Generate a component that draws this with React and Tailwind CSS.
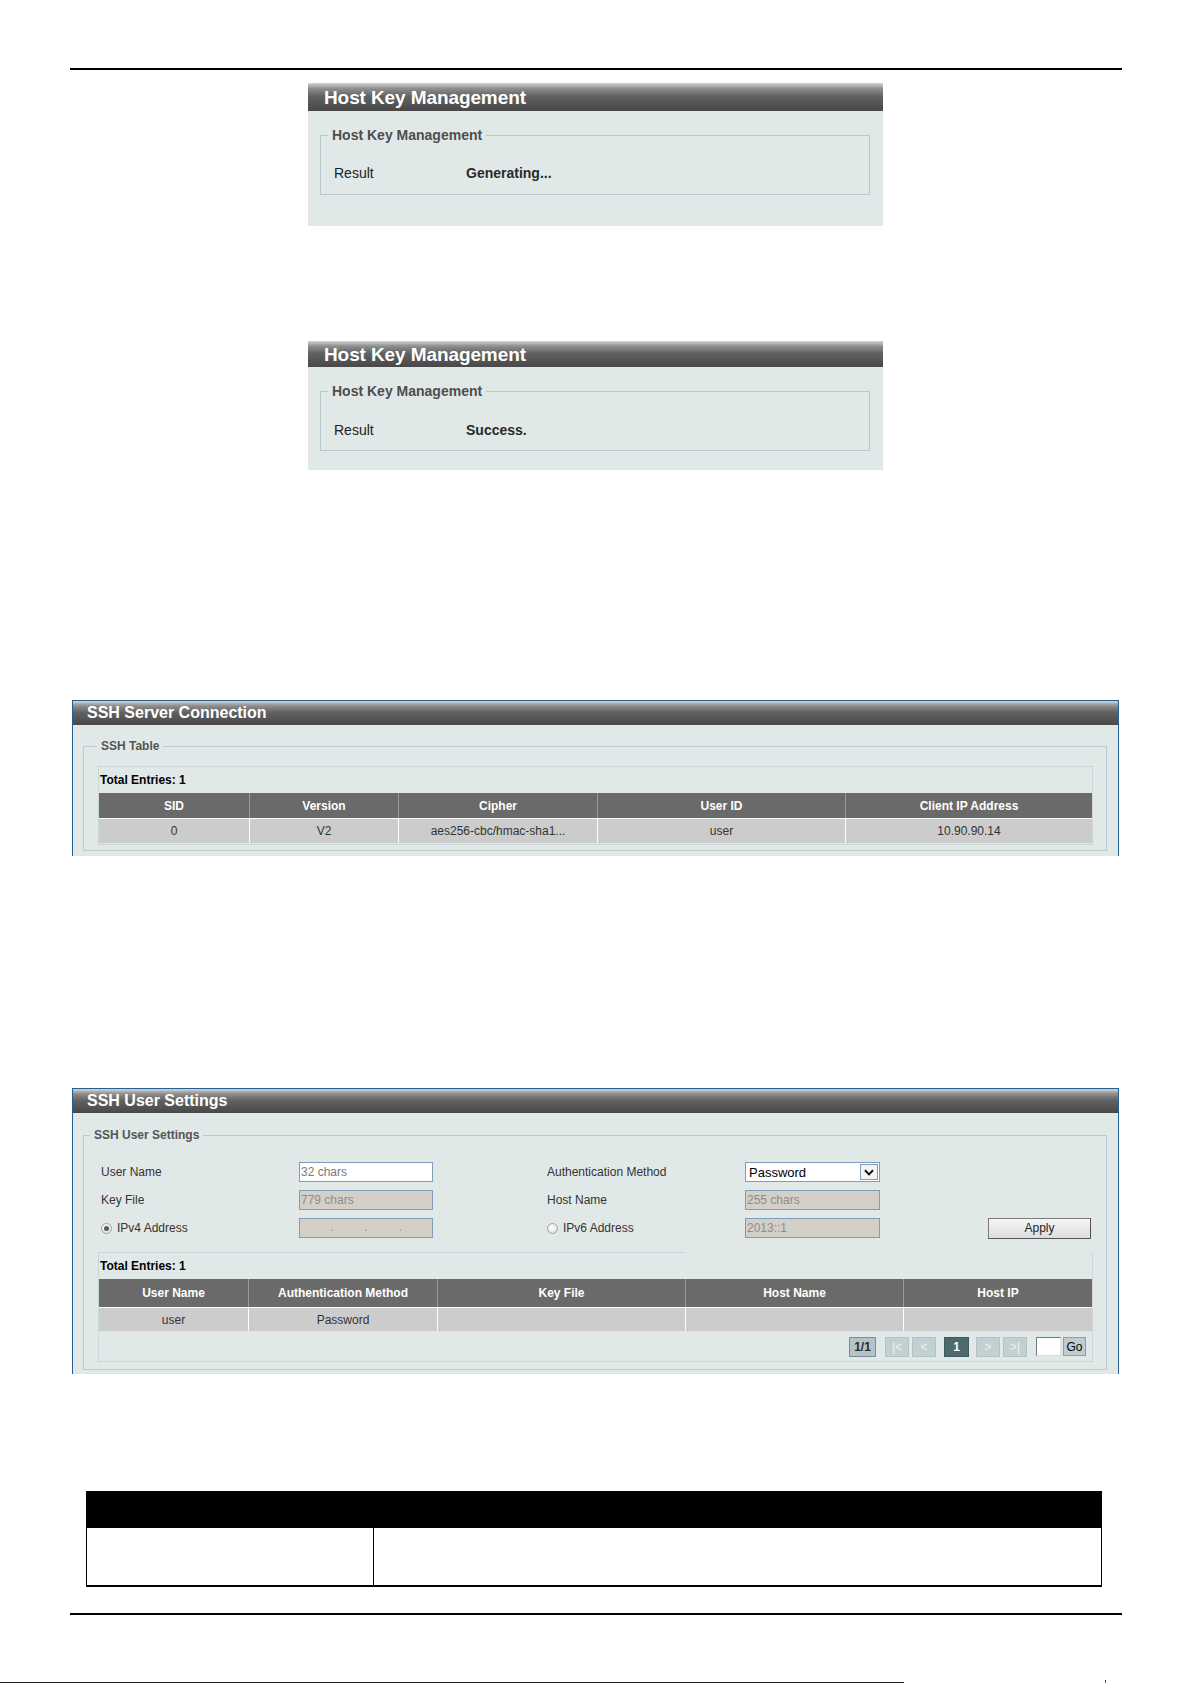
import React from "react";

// Panel title bar shared by every settings panel
function TitleBar({ className, textClass, children }) {
  return (
    <div
      className={
        "flex items-center bg-[linear-gradient(180deg,#d4d4d4_0%,#8e8e8e_20%,#616161_48%,#484848_100%)] " +
        className
      }
    >
      <span className={"font-bold text-white leading-none " + textClass}>{children}</span>
    </div>
  );
}

function HostKeyPanel({ panelClass, headerClass, fieldsetClass, rowClass, value }) {
  return (
    <div className={"ml-[308px] w-[575px] bg-[#e1e9e8] shrink-0 " + panelClass}>
      <TitleBar className={"pl-[16px] " + headerClass} textClass="text-[19px] tracking-[-0.1px]">
        Host Key Management
      </TitleBar>
      <fieldset className={"ml-[12px] mr-[13px] border border-[#b7c8cc] " + fieldsetClass}>
        <legend className="ml-[7px] px-[4px] text-[14px] leading-[16px] font-bold text-[#4d4d4d]">
          Host Key Management
        </legend>
        <div className={"flex pl-[13px] text-[14px] leading-[16px] text-[#222] " + rowClass}>
          <span className="w-[132px]">Result</span>
          <span className="font-bold text-[#2a2a2a]">{value}</span>
        </div>
      </fieldset>
    </div>
  );
}

function TextBox({ value, disabled, dots }) {
  return (
    <div
      className={
        "w-full h-[20px] border border-[#7f9db9] flex items-center pl-[1px] text-[12px] leading-none " +
        (disabled ? "bg-[#d4d0c8] text-[#8c8c8c]" : "bg-white text-[#7a7a7a]")
      }
    >
      {dots ? (
        <div className="flex items-end h-full pb-[4px] pl-[29px] gap-[31px] text-[#8c8c8c]">
          <span className="leading-none">.</span>
          <span className="leading-none">.</span>
          <span className="leading-none">.</span>
        </div>
      ) : (
        value
      )}
    </div>
  );
}

function Radio({ checked }) {
  return (
    <span className="w-[11px] h-[11px] rounded-full border border-[#a3a3a3] bg-[radial-gradient(circle_at_40%_40%,#ffffff,#d8d8d8)] flex items-center justify-center shrink-0">
      {checked && <span className="w-[5px] h-[5px] rounded-full bg-[#5a5a5a]" />}
    </span>
  );
}

function PageBox({ children, kind }) {
  const styles = {
    count: "w-[27px] bg-[#b4c3c5] border-[#7d8e90] text-[#2b2b2b] font-bold",
    off: "w-[24px] bg-[#c3d0d2] border-[#b3c2c4] text-[#eef3f3]",
    on: "w-[25px] bg-[#4e696e] border-[#3f5a5f] text-white font-bold",
  };
  return (
    <div
      className={
        "h-[20px] border flex items-center justify-center text-[12px] leading-none " + styles[kind]
      }
    >
      {children}
    </div>
  );
}

export default function App() {
  return (
    <div className="w-[1192px] h-[1684px] bg-white font-['Liberation_Sans',Arial,sans-serif] overflow-hidden flex flex-col">
      {/* page header rule */}
      <div className="mt-[68px] mx-[70px] h-[2px] bg-black shrink-0" />

      <HostKeyPanel
        panelClass="mt-[13px] pb-[31px]"
        headerClass="h-[28px]"
        fieldsetClass="mt-[16px] pb-[13px]"
        rowClass="pt-[22px]"
        value="Generating..."
      />

      <HostKeyPanel
        panelClass="mt-[115px] pb-[19px]"
        headerClass="h-[26px]"
        fieldsetClass="mt-[16px] pb-[12px]"
        rowClass="pt-[23px]"
        value="Success."
      />

      {/* SSH Server Connection */}
      <div className="mt-[230px] ml-[72px] w-[1047px] border-x border-t border-[#235f91] bg-[#e1e9e8] pb-[5px] shrink-0">
        <TitleBar className="h-[24px] pl-[14px]" textClass="text-[16px]">
          SSH Server Connection
        </TitleBar>
        <fieldset className="mt-[14px] ml-[10px] mr-[11px] border border-[#bccbce] pb-[5px]">
          <legend className="ml-[13px] px-[4px] text-[12px] leading-[14px] font-bold text-[#555]">
            SSH Table
          </legend>
          <div className="mt-[13px] ml-[14px] mr-[13px] border border-[#cdd6d7] pb-[1px]">
            <div className="h-[26px] flex items-center pl-[1px] text-[12px] font-bold text-black">
              Total Entries: 1
            </div>
            <div className="grid grid-cols-[150px_149px_199px_248px_1fr] h-[25px] bg-[#6a6a6a] text-white text-[12px] font-bold">
              {["SID", "Version", "Cipher", "User ID", "Client IP Address"].map((h, i) => (
                <div
                  key={h}
                  className={
                    "flex items-center justify-center " + (i > 0 ? "border-l border-[#9a9a9a]" : "")
                  }
                >
                  {h}
                </div>
              ))}
            </div>
            <div className="grid grid-cols-[150px_149px_199px_248px_1fr] h-[25px] border-t border-white bg-[#cccccc] text-[#333] text-[12px]">
              {["0", "V2", "aes256-cbc/hmac-sha1...", "user", "10.90.90.14"].map((c, i) => (
                <div
                  key={i}
                  className={"flex items-center justify-center " + (i > 0 ? "border-l border-white" : "")}
                >
                  {c}
                </div>
              ))}
            </div>
          </div>
        </fieldset>
      </div>

      {/* SSH User Settings */}
      <div className="mt-[232px] ml-[72px] w-[1047px] border-x border-t border-[#235f91] bg-[#e1e9e8] pb-[4px] shrink-0">
        <TitleBar className="h-[24px] pl-[14px]" textClass="text-[16px]">
          SSH User Settings
        </TitleBar>
        <fieldset className="mt-[15px] ml-[10px] mr-[11px] border border-[#bccbce] pb-[7px]">
          <legend className="ml-[6px] px-[4px] text-[12px] leading-[14px] font-bold text-[#555]">
            SSH User Settings
          </legend>

          <div className="pt-[20px] pl-[17px] flex flex-col gap-[8px] text-[12px] text-[#333]">
            <div className="flex items-center h-[20px]">
              <span className="w-[198px]">User Name</span>
              <div className="w-[134px]">
                <TextBox value="32 chars" />
              </div>
              <span className="ml-[114px] w-[198px]">Authentication Method</span>
              <div className="w-[135px] h-[20px] border border-[#7f9db9] bg-white flex items-center">
                <span className="flex-1 pl-[3px] text-[13px] text-black leading-none">Password</span>
                <div className="w-[18px] h-[16px] mr-[1px] border border-[#7f9db9] bg-[#f4f4f4] flex items-center justify-center">
                  <svg width="10" height="7" viewBox="0 0 10 7">
                    <path d="M1 1.2 L5 5.4 L9 1.2" fill="none" stroke="#111" strokeWidth="2" />
                  </svg>
                </div>
              </div>
            </div>
            <div className="flex items-center h-[20px]">
              <span className="w-[198px]">Key File</span>
              <div className="w-[134px]">
                <TextBox value="779 chars" disabled />
              </div>
              <span className="ml-[114px] w-[198px]">Host Name</span>
              <div className="w-[135px]">
                <TextBox value="255 chars" disabled />
              </div>
            </div>
            <div className="flex items-center h-[20px]">
              <div className="w-[198px] flex items-center gap-[5px]">
                <Radio checked />
                <span>IPv4 Address</span>
              </div>
              <div className="w-[134px]">
                <TextBox disabled dots />
              </div>
              <div className="ml-[114px] w-[198px] flex items-center gap-[5px]">
                <Radio />
                <span>IPv6 Address</span>
              </div>
              <div className="w-[135px]">
                <TextBox value="2013::1" disabled />
              </div>
              <button className="ml-[108px] w-[103px] h-[21px] border border-[#7a7a7a] border-b-[#555] border-r-[#555] bg-[linear-gradient(180deg,#f6f6f6,#dcdcdc)] text-[12px] text-[#222] leading-none">
                Apply
              </button>
            </div>
          </div>

          <div className="mt-[14px] ml-[14px] mr-[13px] border-x border-b border-[#cdd6d7]">
            <div className="-ml-px w-[587px] h-px bg-[#cdd6d7]" />
            <div className="h-[26px] flex items-center pl-[1px] text-[12px] font-bold text-black">
              Total Entries: 1
            </div>
            <div className="grid grid-cols-[149px_189px_248px_218px_1fr] h-[28px] bg-[#6a6a6a] text-white text-[12px] font-bold">
              {["User Name", "Authentication Method", "Key File", "Host Name", "Host IP"].map((h, i) => (
                <div
                  key={h}
                  className={"flex items-center justify-center " + (i > 0 ? "border-l border-[#9a9a9a]" : "")}
                >
                  {h}
                </div>
              ))}
            </div>
            <div className="grid grid-cols-[149px_189px_248px_218px_1fr] h-[24px] border-t border-white bg-[#cccccc] text-[#333] text-[12px]">
              {["user", "Password", "", "", ""].map((c, i) => (
                <div
                  key={i}
                  className={"flex items-center justify-center " + (i > 0 ? "border-l border-white" : "")}
                >
                  {c}
                </div>
              ))}
            </div>
            <div className="h-[30px] border-t border-[#dfe6e6] flex items-center justify-end pr-[6px]">
              <PageBox kind="count">1/1</PageBox>
              <div className="ml-[9px]">
                <PageBox kind="off">|&lt;</PageBox>
              </div>
              <div className="ml-[3px]">
                <PageBox kind="off">&lt;</PageBox>
              </div>
              <div className="ml-[8px]">
                <PageBox kind="on">1</PageBox>
              </div>
              <div className="ml-[7px]">
                <PageBox kind="off">&gt;</PageBox>
              </div>
              <div className="ml-[3px]">
                <PageBox kind="off">&gt;|</PageBox>
              </div>
              <div className="ml-[9px] w-[25px] h-[19px] bg-white border border-t-[#777] border-l-[#777] border-b-[#ddd] border-r-[#ddd]" />
              <div className="ml-[2px] w-[23px] h-[19px] bg-[#bfcdcf] border border-[#8fa1a4] flex items-center justify-center text-[12px] text-black leading-none">
                Go
              </div>
            </div>
          </div>
        </fieldset>
      </div>

      {/* parameter description table */}
      <div className="mt-[117px] ml-[86px] w-[1016px] shrink-0">
        <div className="h-[37px] bg-black" />
        <div className="h-[59px] flex border-l border-r border-b-2 border-black">
          <div className="w-[287px] border-r border-black" />
          <div className="flex-1" />
        </div>
      </div>

      {/* page footer rule */}
      <div className="mt-[26px] mx-[70px] h-[2px] bg-black shrink-0" />
      <div className="mt-[64px] h-[4px] flex items-end shrink-0">
        <div className="w-[904px] h-px bg-[#222]" />
        <div className="ml-[201px] w-px h-[3px] bg-[#555]" />
      </div>
    </div>
  );
}
